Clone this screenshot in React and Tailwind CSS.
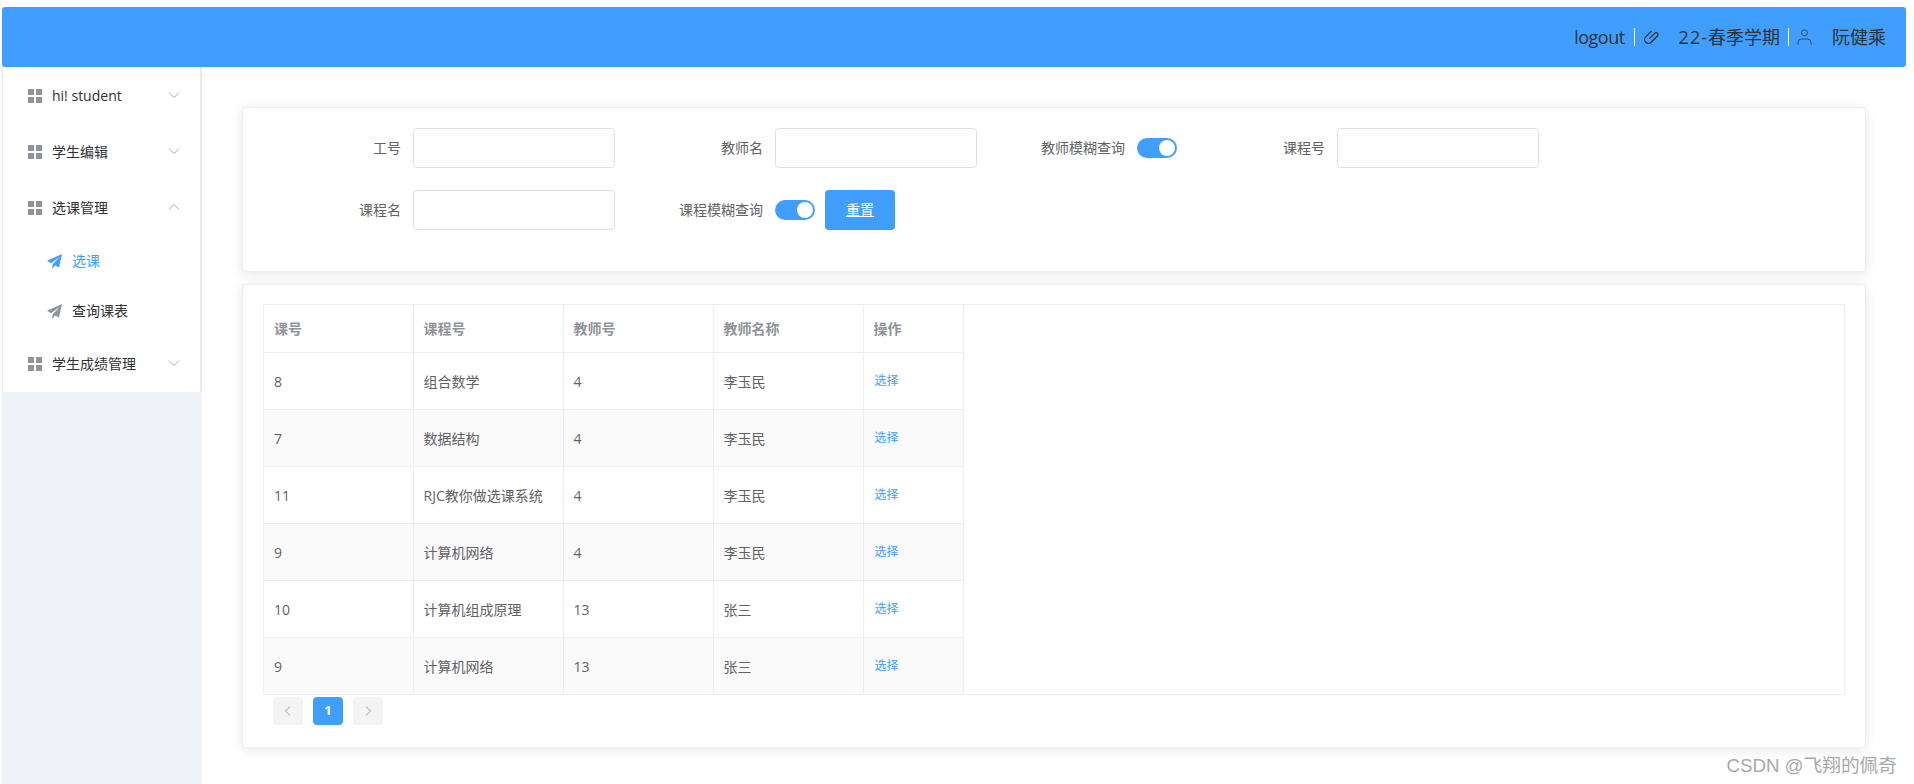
import React from "react";

const FONT = "font-['Open_Sans','Noto_Sans_CJK_SC',sans-serif]";

function Grid() {
  return (
    <svg width="14" height="14" viewBox="0 0 14 14" className="shrink-0" fill="#909399">
      <rect x="0" y="0" width="6" height="6" />
      <rect x="8" y="0" width="6" height="6" />
      <rect x="0" y="8" width="6" height="6" />
      <rect x="8" y="8" width="6" height="6" />
    </svg>
  );
}

function Chevron({ up }) {
  return (
    <svg width="12" height="12" viewBox="0 0 12 12" fill="none" stroke="#a8abb2" strokeWidth="1" className="ml-auto mr-5 mb-[3px]">
      <path d={up ? "M1 8.5 6 3.5l5 5" : "M1 3.5 6 8.5l5-5"} />
    </svg>
  );
}

function Plane({ color }) {
  return (
    <svg width="15" height="15" viewBox="0 0 14 14" fill={color} className="-ml-px shrink-0">
      <path d="M14 0 0 6.2l3.8 2.4L12 2.6 5.4 9.6 4.6 14l3-3.2 3.6 1.8z" />
    </svg>
  );
}

function MenuItem({ label, up }) {
  return (
    <div className="flex h-14 items-center pl-[25px]">
      <Grid />
      <span className="ml-[10px] text-sm text-[#303133]">{label}</span>
      <Chevron up={up} />
    </div>
  );
}

function SubItem({ label, active }) {
  return (
    <div className="flex h-[50px] items-center pl-[45px]">
      <Plane color={active ? "#409eff" : "#909399"} />
      <span className={`ml-[10px] text-sm ${active ? "text-[#409eff]" : "text-[#303133]"}`}>{label}</span>
    </div>
  );
}

function Sidebar() {
  return (
    <aside className="ml-[2px] w-[200px] shrink-0 self-stretch bg-[#eef1f6]">
      <div className="border-x border-r-2 border-[#e6e9f0] bg-white pt-px">
        <MenuItem label="hi! student" />
        <MenuItem label="学生编辑" />
        <MenuItem label="选课管理" up />
        <SubItem label="选课" active />
        <SubItem label="查询课表" />
        <MenuItem label="学生成绩管理" />
      </div>
    </aside>
  );
}

function Label({ children }) {
  return <label className="w-[150px] shrink-0 pr-3 text-right text-sm leading-10 text-[#606266]">{children}</label>;
}

function Input() {
  return <div className="mr-[10px] h-10 w-[202px] shrink-0 rounded border border-[#dcdfe6] bg-white" />;
}

function Toggle() {
  return (
    <div className="flex h-10 w-[50px] shrink-0 items-center">
      <div className="flex h-5 w-10 justify-end rounded-full bg-[#409eff] p-[2px]">
        <div className="size-4 rounded-full bg-white" />
      </div>
    </div>
  );
}

function FormCard() {
  return (
    <section className="rounded border border-[#ebeef5] bg-white pt-5 pl-5 pb-[41px] shadow-[0_2px_12px_0_rgba(0,0,0,0.1)]">
      <div className="flex h-10">
        <Label>工号</Label>
        <Input />
        <Label>教师名</Label>
        <Input />
        <Label>教师模糊查询</Label>
        <Toggle />
        <Label>课程号</Label>
        <Input />
      </div>
      <div className="mt-[22px] flex h-10">
        <Label>课程名</Label>
        <Input />
        <Label>课程模糊查询</Label>
        <Toggle />
        <button className="h-10 w-[70px] rounded bg-[#409eff] text-sm text-white underline">重置</button>
      </div>
    </section>
  );
}

const rows = [
  ["8", "组合数学", "4", "李玉民"],
  ["7", "数据结构", "4", "李玉民"],
  ["11", "RJC教你做选课系统", "4", "李玉民"],
  ["9", "计算机网络", "4", "李玉民"],
  ["10", "计算机组成原理", "13", "张三"],
  ["9", "计算机网络", "13", "张三"],
];

function Table() {
  return (
    <div className="border border-[#ebeef5] bg-white">
      <table className="w-[699px] table-fixed border-collapse text-sm">
        <colgroup>
          <col className="w-[149px]" />
          <col className="w-[150px]" />
          <col className="w-[150px]" />
          <col className="w-[150px]" />
          <col className="w-[100px]" />
        </colgroup>
        <thead>
          <tr className="h-[47px] border-b border-[#ebeef5]">
            {["课号", "课程号", "教师号", "教师名称", "操作"].map((h) => (
              <th key={h} className="border-r border-[#ebeef5] px-[10px] pt-[2px] text-left font-bold text-[#909399]">{h}</th>
            ))}
          </tr>
        </thead>
        <tbody>
          {rows.map((r, i) => (
            <tr key={i} className={`h-[57px] border-b border-[#ebeef5] last:border-b-0 ${i % 2 ? "bg-[#fafafa]" : "bg-white"}`}>
              {r.map((c, j) => (
                <td key={j} className="border-r border-[#ebeef5] px-[10px] pt-[2px] text-[#606266]">{c}</td>
              ))}
              <td className="border-r border-[#ebeef5] pl-[11px] pr-[10px] text-xs text-[#409eff]">选择</td>
            </tr>
          ))}
        </tbody>
      </table>
    </div>
  );
}

function PageBtn({ dir }) {
  return (
    <div className="flex h-7 w-[30px] items-center justify-center rounded-sm bg-[#f4f4f5]">
      <svg width="12" height="12" viewBox="0 0 12 12" fill="none" stroke="#c0c4cc" strokeWidth="1.3">
        <path d={dir === "l" ? "M8 1.5 3.5 6 8 10.5" : "M4 1.5 8.5 6 4 10.5"} />
      </svg>
    </div>
  );
}

function TableCard() {
  return (
    <section className="mt-3 rounded border border-[#ebeef5] bg-white px-5 pt-[19px] pb-[22px] shadow-[0_2px_12px_0_rgba(0,0,0,0.1)]">
      <Table />
      <div className="mt-[2px] flex gap-[10px] pl-[10px]">
        <PageBtn dir="l" />
        <div className="flex h-7 w-[30px] items-center justify-center rounded-sm bg-[#409eff] text-[13px] font-bold text-white">1</div>
        <PageBtn dir="r" />
      </div>
    </section>
  );
}

export default function App() {
  return (
    <div className={`relative flex h-[784px] w-[1914px] flex-col overflow-hidden bg-white ${FONT}`}>
      <header className="mt-[7px] mr-2 ml-[2px] flex h-[60px] shrink-0 items-center justify-end rounded-[3px] bg-[#409eff] pr-5 text-lg text-[#303133]">
        <span className="tracking-[-0.5px]">logout</span>
        <span className="mx-[9px] h-[18px] w-px bg-white" />
        <svg width="16" height="16" viewBox="0 0 16 16" fill="none" stroke="#303133" strokeWidth="1" className="-ml-px mr-px">
          <g transform="rotate(45 8 8) translate(8 8) scale(1.2) translate(-8 -9)">
            <path d="M8 11V4.6a1.6 1.6 0 0 1 3.2 0V12a3.2 3.2 0 0 1-6.4 0V5" />
          </g>
        </svg>
        <span className="ml-[19px]">
          <span className="tracking-[1px]">22-</span>春季学期
        </span>
        <span className="mx-[8px] h-[18px] w-px bg-white" />
        <svg width="15" height="16" viewBox="0 0 15 16" fill="none" stroke="#3a4a60" strokeWidth="1">
          <circle cx="7.5" cy="3.8" r="3" />
          <path d="M1 15.5V13.5A3.5 3.5 0 0 1 4.5 10h6a3.5 3.5 0 0 1 3.5 3.5v2" />
        </svg>
        <span className="ml-[20px]">阮健乘</span>
      </header>
      <div className="flex min-h-0 flex-1">
        <Sidebar />
        <main className="ml-10 w-[1624px] pt-10">
          <FormCard />
          <TableCard />
        </main>
      </div>
      <div className="absolute right-[17px] bottom-1 font-['Liberation_Sans','Noto_Sans_CJK_SC',sans-serif] text-[18.7px] text-[#a8a8a8]">CSDN @飞翔的佩奇</div>
    </div>
  );
}
